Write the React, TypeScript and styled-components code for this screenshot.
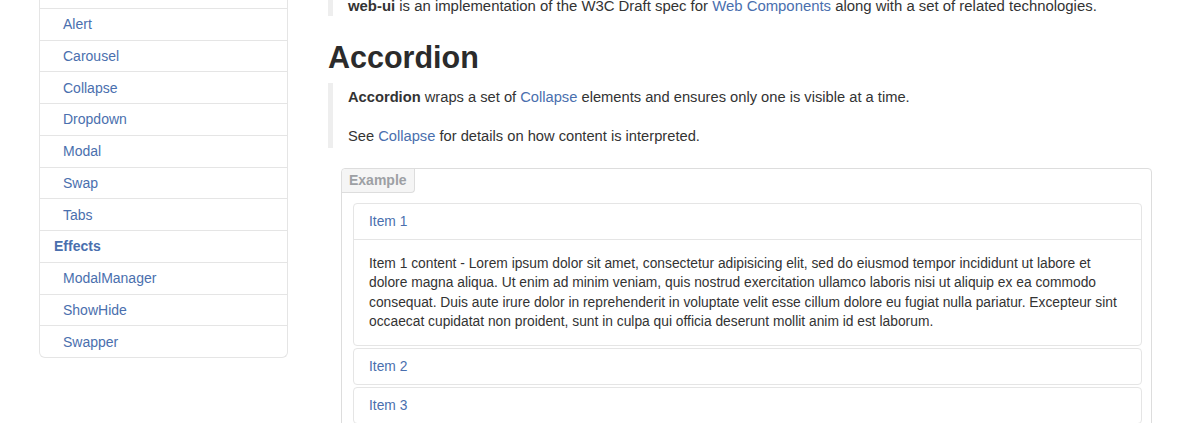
import React from 'react'
import styled, { createGlobalStyle } from 'styled-components'

const link = '#4a6fae'
const text = '#333333'
const line = '#e5e5e5'

const GlobalStyle = createGlobalStyle`
  html, body {
    margin: 0;
    padding: 0;
    background: #ffffff;
    overflow: hidden;
  }
  body {
    font-family: 'Liberation Sans', Arial, Helvetica, sans-serif;
    color: ${text};
    -webkit-font-smoothing: antialiased;
  }
`

const Page = styled.div`
  display: flex;
  align-items: flex-start;
  margin-top: -24px;
  width: 1200px;
`

const SideNav = styled.ul`
  list-style: none;
  margin: 0 0 0 39px;
  padding: 0;
  width: 249px;
  box-sizing: border-box;
  border: 1px solid ${line};
  border-top: none;
  border-radius: 0 0 6px 6px;
  background: #ffffff;
  flex-shrink: 0;
`

const NavItem = styled.li<{ $header?: boolean }>`
  display: flex;
  align-items: center;
  height: 31.75px;
  box-sizing: border-box;
  border-top: 1px solid ${line};
  padding-left: ${(p) => (p.$header ? '14px' : '23px')};
  font-size: 14px;
  font-weight: ${(p) => (p.$header ? 700 : 400)};
  color: ${link};
  cursor: pointer;
`

const Main = styled.main`
  margin-left: 40px;
  padding-top: 20px;
  width: 832px;
`

const Quote = styled.blockquote<{ $tight?: boolean }>`
  margin: 0;
  border-left: 5px solid #eeeeee;
  padding: ${(p) => (p.$tight ? '0 0 0 15px' : '3px 0 1px 15px')};
`

const QuoteText = styled.p<{ $lh?: number; $size?: number }>`
  margin: 0;
  font-size: ${(p) => p.$size ?? 14.7}px;
  line-height: ${(p) => p.$lh ?? 22}px;
  & + & {
    margin-top: 17px;
  }
`

const A = styled.a`
  color: ${link};
  text-decoration: none;
`

const Title = styled.h2`
  margin: 21px 0 6px;
  font-size: 30.5px;
  line-height: 40px;
  font-weight: 700;
  color: #2b2b2b;
`

const Example = styled.div`
  position: relative;
  margin: 20px 0 0 13px;
  width: 811px;
  box-sizing: border-box;
  border: 1px solid #dddddd;
  border-radius: 4px;
  padding: 34px 9px 14px 11px;
`

const ExampleTag = styled.span`
  position: absolute;
  top: 0;
  left: 0;
  padding: 3px 7px;
  font-size: 14px;
  line-height: 17px;
  font-weight: 700;
  color: #9da0a4;
  background: #f5f5f5;
  border: 1px solid #dddddd;
  border-top: none;
  border-left: none;
  border-radius: 4px 0 4px 0;
`

const Accordion = styled.div`
  display: flex;
  flex-direction: column;
  gap: 2px;
`

const Group = styled.div`
  border: 1px solid ${line};
  border-radius: 4px;
`

const Toggle = styled.a`
  display: block;
  padding: 8px 15px;
  font-size: 13.8px;
  line-height: 19px;
  color: ${link};
  text-decoration: none;
`

const Inner = styled.div`
  border-top: 1px solid ${line};
  padding: 14px 15px;
  font-size: 13.8px;
  line-height: 19.3px;
  color: ${text};
`

const components = ['Accordion', 'Alert', 'Carousel', 'Collapse', 'Dropdown', 'Modal', 'Swap', 'Tabs']
const effects = ['ModalManager', 'ShowHide', 'Swapper']

const lorem =
  'Item 1 content - Lorem ipsum dolor sit amet, consectetur adipisicing elit, sed do eiusmod tempor incididunt ut labore et dolore magna aliqua. Ut enim ad minim veniam, quis nostrud exercitation ullamco laboris nisi ut aliquip ex ea commodo consequat. Duis aute irure dolor in reprehenderit in voluptate velit esse cillum dolore eu fugiat nulla pariatur. Excepteur sint occaecat cupidatat non proident, sunt in culpa qui officia deserunt mollit anim id est laborum.'

const App = () => {
  return (
    <>
      <GlobalStyle />
      <Page>
        <SideNav>
          {components.map((name) => (
            <NavItem key={name}>{name}</NavItem>
          ))}
          <NavItem $header>Effects</NavItem>
          {effects.map((name) => (
            <NavItem key={name}>{name}</NavItem>
          ))}
        </SideNav>

        <Main>
          <Quote $tight>
            <QuoteText $lh={20} $size={14.9}>
              <strong>web-ui</strong> is an implementation of the W3C Draft spec for{' '}
              <A href="#">Web Components</A> along with a set of related technologies.
            </QuoteText>
          </Quote>

          <Title>Accordion</Title>

          <Quote>
            <QuoteText>
              <strong>Accordion</strong> wraps a set of <A href="#">Collapse</A> elements and ensures
              only one is visible at a time.
            </QuoteText>
            <QuoteText>
              See <A href="#">Collapse</A> for details on how content is interpreted.
            </QuoteText>
          </Quote>

          <Example>
            <ExampleTag>Example</ExampleTag>
            <Accordion>
              <Group>
                <Toggle href="#">Item 1</Toggle>
                <Inner>{lorem}</Inner>
              </Group>
              <Group>
                <Toggle href="#">Item 2</Toggle>
              </Group>
              <Group>
                <Toggle href="#">Item 3</Toggle>
              </Group>
            </Accordion>
          </Example>
        </Main>
      </Page>
    </>
  )
}

export default App
